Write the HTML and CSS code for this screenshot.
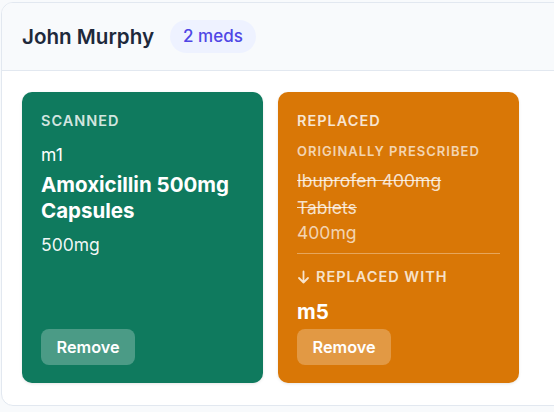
FILE: index.html
```html
<!DOCTYPE html>
<html>
<head>
<meta charset="utf-8">
<link rel="stylesheet" href="styles.css">
</head>
<body>
<div class="panel">
  <div class="panel-head">
    <h2 class="patient">John Murphy</h2>
    <span class="badge">2 meds</span>
  </div>
  <div class="panel-body">
    <div class="med scanned">
      <div class="med-info">
        <div class="label">SCANNED</div>
        <div class="code">m1</div>
        <div class="name">Amoxicillin 500mg Capsules</div>
        <div class="dose">500mg</div>
      </div>
      <button class="remove">Remove</button>
    </div>
    <div class="med replaced">
      <div class="med-info">
        <div class="label">REPLACED</div>
        <div class="sublabel">ORIGINALLY PRESCRIBED</div>
        <div class="old-name">Ibuprofen 400mg Tablets</div>
        <div class="old-dose">400mg</div>
        <div class="divider"></div>
        <div class="with-label"><svg class="arrow" width="13" height="14" viewBox="0 0 13 14" fill="none" stroke="currentColor" stroke-width="1.8" stroke-linecap="round" stroke-linejoin="round"><path d="M6.5 1.5v11M2 8l4.5 4.5L11 8"/></svg>REPLACED WITH</div>
        <div class="new-code">m5</div>
      </div>
      <button class="remove">Remove</button>
    </div>
  </div>
</div>
</body>
</html>
```
FILE: styles.css
```css
html, body {
  margin: 0;
  padding: 0;
  background: #f8fafc;
  overflow: hidden;
}
body {
  font-family: Inter, "Noto Sans", sans-serif;
  padding: 2px 0 0 1px;
}
.panel {
  width: 600px;
  background: #ffffff;
  border: 1px solid #e2e8f0;
  border-radius: 12px;
  overflow: hidden;
}
.panel-head {
  display: flex;
  align-items: center;
  gap: 16px;
  padding: 17px 20px 17px;
  background: #f8fafc;
  border-bottom: 1px solid #e2e8f0;
}
.patient {
  margin: 0;
  font-size: 20.6px;
  font-weight: 600;
  color: #1e293b;
  line-height: 28px;
}
.badge {
  background: #eef2ff;
  color: #4f46e5;
  font-size: 17px;
  font-weight: 500;
  line-height: 33px;
  padding: 0 13px;
  border-radius: 17px;
}
.panel-body {
  display: flex;
  gap: 15px;
  padding: 21px 20px 22px;
}
.med {
  width: 241px;
  height: 291px;
  box-sizing: border-box;
  padding: 19px 19px 18px;
  border-radius: 10px;
  color: #ffffff;
  display: flex;
  flex-direction: column;
  justify-content: space-between;
  align-items: flex-start;
  box-shadow: 0 1px 3px rgba(0,0,0,0.1);
}
.med-info {
  align-self: stretch;
}
.scanned { background: #0f7a5e; }
.replaced { background: #d97706; }
.label {
  font-size: 14.5px;
  font-weight: 600;
  letter-spacing: 1px;
  line-height: 20px;
  color: rgba(255,255,255,0.82);
}
.code {
  margin-top: 12px;
  font-size: 17.5px;
  line-height: 24px;
}
.name {
  margin-top: 5px;
  font-size: 20.5px;
  font-weight: 700;
  line-height: 26px;
}
.dose {
  margin-top: 9px;
  font-size: 17.5px;
  line-height: 24px;
  color: rgba(255,255,255,0.95);
}
.sublabel {
  margin-top: 11px;
  font-size: 13px;
  font-weight: 600;
  letter-spacing: 1px;
  line-height: 18px;
  color: rgba(255,255,255,0.7);
}
.old-name {
  margin-top: 7px;
  font-size: 17.5px;
  line-height: 27px;
  text-decoration: line-through;
  color: rgba(255,255,255,0.8);
}
.old-dose {
  font-size: 17.5px;
  line-height: 24px;
  color: rgba(255,255,255,0.7);
}
.divider {
  margin-top: 8px;
  height: 1px;
  background: rgba(255,255,255,0.35);
}
.with-label {
  margin-top: 13px;
  display: flex;
  align-items: center;
  gap: 6px;
  font-size: 14.5px;
  font-weight: 600;
  letter-spacing: 1px;
  line-height: 20px;
  color: rgba(255,255,255,0.8);
}
.arrow { display: block; }
.new-code {
  margin-top: 12px;
  font-size: 20.5px;
  font-weight: 700;
  line-height: 26px;
}
.remove {
  font-family: inherit;
  font-size: 16.3px;
  font-weight: 600;
  color: #ffffff;
  background: rgba(255,255,255,0.25);
  border: none;
  border-radius: 8px;
  height: 36px;
  padding: 0 15.5px;
  cursor: pointer;
}
```
